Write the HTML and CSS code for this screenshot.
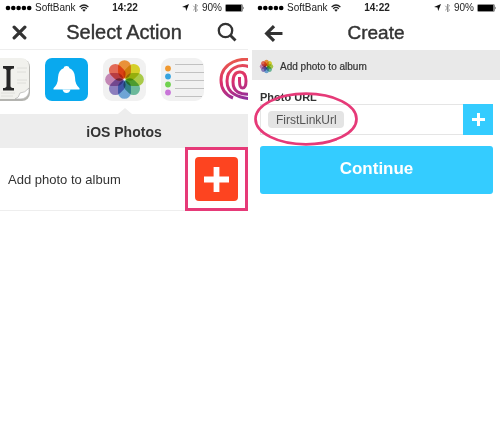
FILE: index.html
```
<!DOCTYPE html>
<html lang="en">
<head>
<meta charset="utf-8">
<title>Select Action</title>
<link rel="stylesheet" href="styles.css">
</head>
<body>
<svg class="defs" aria-hidden="true">
  <defs>
    <symbol id="wifi" viewBox="0 0 10 8">
      <path d="M.6 3Q5-1 9.400 3M2.200 4.700Q5 2.200 7.800 4.700" fill="none" stroke="#222" stroke-width="1.200"/>
      <path d="M3.200 5.800Q5 4.500 6.800 5.800L5 7.800Z" fill="#222"/>
    </symbol>
    <symbol id="locate" viewBox="0 0 7 7"><path d="M7 0 4.200 7 3.500 3.600 0 3Z" fill="#111"/></symbol>
    <symbol id="bluetooth" viewBox="0 0 6 10"><path d="M.8 2.800 5 7 3 9V1l2 2L.8 7.200" fill="none" stroke="#888" stroke-width=".9"/></symbol>
    <symbol id="battery" viewBox="0 0 20 8">
      <rect x=".5" y=".5" width="17" height="7" rx="1" fill="#fff" stroke="#444" stroke-width=".6"/>
      <rect x="1" y="1" width="15.500" height="6" fill="#000"/>
      <path d="M18.300 2.500q1.400 1.500 0 3Z" fill="#222"/>
    </symbol>
    <symbol id="flower" viewBox="0 0 40 40">
      <g class="petals">
        <rect x="14" y="2" width="12" height="17" rx="6" fill="#f79a3c"/>
        <rect x="14" y="2" width="12" height="17" rx="6" fill="#e2dc2c" transform="rotate(45 20 20)"/>
        <rect x="14" y="2" width="12" height="17" rx="6" fill="#b3d64c" transform="rotate(90 20 20)"/>
        <rect x="14" y="2" width="12" height="17" rx="6" fill="#72c4a4" transform="rotate(135 20 20)"/>
        <rect x="14" y="2" width="12" height="17" rx="6" fill="#74aee2" transform="rotate(180 20 20)"/>
        <rect x="14" y="2" width="12" height="17" rx="6" fill="#9485c8" transform="rotate(225 20 20)"/>
        <rect x="14" y="2" width="12" height="17" rx="6" fill="#cf8fc0" transform="rotate(270 20 20)"/>
        <rect x="14" y="2" width="12" height="17" rx="6" fill="#f0705c" transform="rotate(315 20 20)"/>
      </g>
    </symbol>
    <symbol id="plus" viewBox="0 0 26 26"><path d="M13 0v26M0 13h26" stroke="#fff" stroke-width="6"/></symbol>
  </defs>
</svg>
<main class="screens">
  <section class="screen">
    <div class="status">
      <span class="carrier"><svg class="dots" viewBox="0 0 27 6" aria-hidden="true"><g fill="#000"><circle cx="3" cy="3" r="2.300"/><circle cx="8.300" cy="3" r="2.300"/><circle cx="13.600" cy="3" r="2.300"/><circle cx="18.900" cy="3" r="2.300"/><circle cx="24.200" cy="3" r="2.300"/></g></svg>SoftBank<svg class="wifi" aria-hidden="true"><use href="#wifi"/></svg></span>
      <time class="time">14:22</time>
      <span class="power"><svg class="locate" aria-hidden="true"><use href="#locate"/></svg><svg class="bluetooth" aria-hidden="true"><use href="#bluetooth"/></svg>90%<svg class="battery" aria-hidden="true"><use href="#battery"/></svg></span>
    </div>
    <header class="header header-lined">
      <button class="nav" aria-label="Close"><svg class="close" viewBox="0 0 14 14"><path d="M2 2l10 10M12 2 2 12" stroke="#333" stroke-width="3" stroke-linecap="round"/></svg></button>
      <h1 class="title title-wide">Select Action</h1>
      <button class="nav nav-end" aria-label="Search"><svg class="search" viewBox="0 0 20 20"><circle cx="8.500" cy="8.500" r="6.700" fill="none" stroke="#333" stroke-width="2.300"/><path d="m13.500 13.500 5 5" stroke="#333" stroke-width="2.800"/></svg></button>
    </header>
    <nav class="channels" aria-label="Channels">
      <button class="channel" aria-label="Instapaper"><svg viewBox="0 0 43 43">
        <rect y="1" width="43" height="42" rx="8" fill="#b4b4b0"/><rect width="42" height="41" rx="8" fill="#f1f1ed"/>
        <path d="M30 10h10M30 14h9M30 22h10M30 25h9M14 35h14M14 38h12" stroke="#dededa" stroke-width="1"/>
        <path d="M28 41q4-1 5-6 5 0 9-5v4q-2 7-9 7Z" fill="#fff" stroke="#aaa" stroke-width=".6"/>
        <path d="M16 8h11v2.500q-3.500 0-3.500 2V28q0 2 3.500 2v2.500H16V30q3.500 0 3.500-2V12.500q0-2-3.500-2Z" fill="#272727"/>
      </svg></button>
      <button class="channel" aria-label="Notifications"><svg viewBox="0 0 43 43">
        <rect width="43" height="43" rx="7" fill="#09a9ee"/>
        <path d="M21.500 8q2.600 0 3 2.300 5 2 5.500 9 0 7 4.500 11v1.200H8.500v-1.200q4.500-4 4.500-11 .5-7 5.500-9 .4-2.300 3-2.300Z" fill="#fff"/><path d="M17.500 31.500h8q-1 3.500-4 3.500t-4-3.500Z" fill="#fff"/>
      </svg></button>
      <button class="channel selected" aria-label="iOS Photos"><svg viewBox="0 0 43 43"><rect width="43" height="43" rx="9" fill="#f1f1f1"/><use href="#flower" x="0" y="0" width="43" height="43"/></svg></button>
      <button class="channel" aria-label="Reminders"><svg viewBox="0 0 43 43">
        <rect width="43" height="43" rx="9" fill="#f1f1f1"/>
        <path d="M14 6.500h28M14 14.500h29M14 22.500h29M14 30.500h29M14 38.500h27" stroke="#bbb" stroke-width=".9"/>
        <circle cx="7" cy="10.500" r="2.900" fill="#f0982f"/><circle cx="7" cy="18.500" r="2.900" fill="#36a4e0"/><circle cx="7" cy="26.500" r="2.900" fill="#70d14f"/><circle cx="7" cy="34.500" r="2.900" fill="#c875d8"/>
      </svg></button>
      <button class="channel" aria-label="Spiral"><svg viewBox="0 0 43 43">
        <defs><linearGradient id="warm" gradientUnits="userSpaceOnUse" x1="10" y1="0" x2="22" y2="43"><stop offset="0" stop-color="#ea6048"/><stop offset=".5" stop-color="#dc2f6c"/><stop offset="1" stop-color="#8c309f"/></linearGradient></defs>
        <g fill="none" stroke="url(#warm)" stroke-width="3"><path d="M33 2Q22 0 14 4 2 10 2 22q0 13 12 18"/><path d="M33 10Q23 5 15 10 8 14 8 23q0 9 7 13 6 4 18 5"/><path d="M33 36Q14 38 14 24q0-10 7-10 6 0 6 9 0 7-3.500 7-3 0-3-7 0-4 0-4"/></g>
      </svg></button>
    </nav>
    <h2 class="group">iOS Photos</h2>
    <div class="action">
      <span>Add photo to album</span>
      <div class="marked"><button class="add" aria-label="Add photo to album"><svg viewBox="0 0 26 26"><use href="#plus"/></svg></button></div>
    </div>
  </section>
  <section class="screen">
    <div class="status">
      <span class="carrier"><svg class="dots" viewBox="0 0 27 6" aria-hidden="true"><g fill="#000"><circle cx="3" cy="3" r="2.300"/><circle cx="8.300" cy="3" r="2.300"/><circle cx="13.600" cy="3" r="2.300"/><circle cx="18.900" cy="3" r="2.300"/><circle cx="24.200" cy="3" r="2.300"/></g></svg>SoftBank<svg class="wifi" aria-hidden="true"><use href="#wifi"/></svg></span>
      <time class="time">14:22</time>
      <span class="power"><svg class="locate" aria-hidden="true"><use href="#locate"/></svg><svg class="bluetooth" aria-hidden="true"><use href="#bluetooth"/></svg>90%<svg class="battery" aria-hidden="true"><use href="#battery"/></svg></span>
    </div>
    <header class="header">
      <button class="nav" aria-label="Back"><svg class="back" viewBox="0 0 18 16"><path d="M17.500 8H3M9.500 1 2.500 8l7 7" fill="none" stroke="#333" stroke-width="3"/></svg></button>
      <h1 class="title">Create</h1>
      <span></span>
    </header>
    <div class="summary"><svg class="small-flower" aria-hidden="true"><use href="#flower"/></svg>Add photo to album</div>
    <form class="form">
      <label class="label" for="photo-url">Photo URL</label>
      <div class="field">
        <input class="chip" id="photo-url" type="text" value="FirstLinkUrl">
        <button type="button" class="insert" aria-label="Insert ingredient"><svg viewBox="0 0 26 26" aria-hidden="true"><use href="#plus"/></svg></button>
        <svg class="ring" viewBox="0 0 104 54" aria-hidden="true"><ellipse cx="52" cy="27" rx="50.500" ry="25.300" fill="none" stroke="#e63a78" stroke-width="2.700"/></svg>
      </div>
      <button type="button" class="continue">Continue</button>
    </form>
  </section>
</main>
</body>
</html>
```
FILE: styles.css
```
* { box-sizing: border-box; }
body {
  margin: 0;
  background: #fff;
  color: #333;
  font-family: "Liberation Sans", Arial, sans-serif;
}
button {
  padding: 0;
  border: 0;
  background: none;
  font: inherit;
}
svg { display: block; }
.defs { position: absolute; width: 0; height: 0; }
.screens {
  display: grid;
  grid-template-columns: 1fr 1fr;
  gap: 4px;
}
.screen { min-width: 0; }
.status {
  display: grid;
  grid-template-columns: 1fr auto 1fr;
  align-items: center;
  height: 15px;
  padding: 0 3px 0 5px;
  color: #222;
  font-size: 10px;
}
.carrier, .power { display: flex; align-items: center; gap: 3px; }
.power { justify-content: flex-end; }
.time { font-weight: bold; }
.dots { width: 27px; height: 6px; }
.wifi { width: 10px; height: 8px; }
.locate { width: 7px; height: 7px; }
.bluetooth { width: 7px; height: 10px; }
.battery { width: 20px; height: 8px; }
.header {
  display: grid;
  grid-template-columns: 40px 1fr 40px;
  align-items: center;
  height: 35px;
  padding-top: 1px;
}
.header-lined {
  padding: 0;
  border-bottom: 1px solid #eee;
}
.title {
  margin: 0;
  font-size: 19px;
  font-weight: normal;
  line-height: 24px;
  text-align: center;
  -webkit-text-stroke: 0.4px #333;
}
.title-wide { font-size: 20px; }
.nav { padding-left: 12px; }
.nav-end { padding-left: 9px; }
.close { width: 15px; height: 15px; }
.search { width: 20px; height: 20px; }
.back { width: 19px; height: 17px; }
.channels {
  display: flex;
  justify-content: center;
  gap: 15px;
  height: 64px;
  padding-top: 8px;
  overflow: hidden;
}
.channel {
  flex: 0 0 43px;
  height: 56px;
}
.channel svg { width: 43px; height: 43px; margin-bottom: 13px; }
.selected { position: relative; }
.selected::after {
  content: "";
  position: absolute;
  bottom: 0;
  left: 15px;
  border: 7px solid transparent;
  border-top: 0;
  border-bottom: 6px solid #ededed;
}
.petals rect { mix-blend-mode: multiply; }
.group {
  margin: 0;
  background: #ededed;
  font-size: 14px;
  line-height: 36px;
  height: 34px;
  text-align: center;
}
.action {
  display: flex;
  align-items: center;
  justify-content: space-between;
  height: 63px;
  padding-left: 8px;
  border-bottom: 1px solid #eee;
  font-size: 13px;
}
.marked {
  padding: 7px;
  border: 3px solid #e63a78;
}
.add {
  display: grid;
  place-items: center;
  width: 43px;
  height: 44px;
  border-radius: 4px;
  background: #fd4420;
}
.add svg { width: 25px; height: 25px; }
.summary {
  display: flex;
  align-items: center;
  gap: 6px;
  height: 30px;
  padding: 3px 7px 0;
  background: #e9e9e9;
  font-size: 10px;
  -webkit-text-stroke: 0.2px #333;
}
.small-flower { width: 15px; height: 15px; }
.form { padding: 10px 7px 0 8px; }
.label {
  display: block;
  font-size: 11px;
  font-weight: bold;
  line-height: 14px;
}
.field {
  position: relative;
  display: flex;
  align-items: center;
  justify-content: space-between;
  height: 31px;
  padding-left: 7px;
  border: 1px solid #e5e5e5;
  border-right: 0;
}
.chip {
  width: 76px;
  height: 17px;
  padding: 0 7px 0 8px;
  border: 0;
  border-radius: 4px;
  background: #e4e4e4;
  color: #555;
  font-family: inherit;
  font-size: 12px;
}
.insert {
  display: grid;
  place-items: center;
  width: 30px;
  height: 31px;
  background: #34ccff;
}
.insert svg { width: 13px; height: 13px; }
.ring {
  position: absolute;
  top: -13px;
  left: -7px;
  width: 104px;
  height: 54px;
}
.continue {
  display: block;
  width: 100%;
  height: 48px;
  margin-top: 11px;
  padding-bottom: 3px;
  border-radius: 3px;
  background: #34ccff;
  color: #fff;
  font-size: 17px;
  font-weight: bold;
}
```
